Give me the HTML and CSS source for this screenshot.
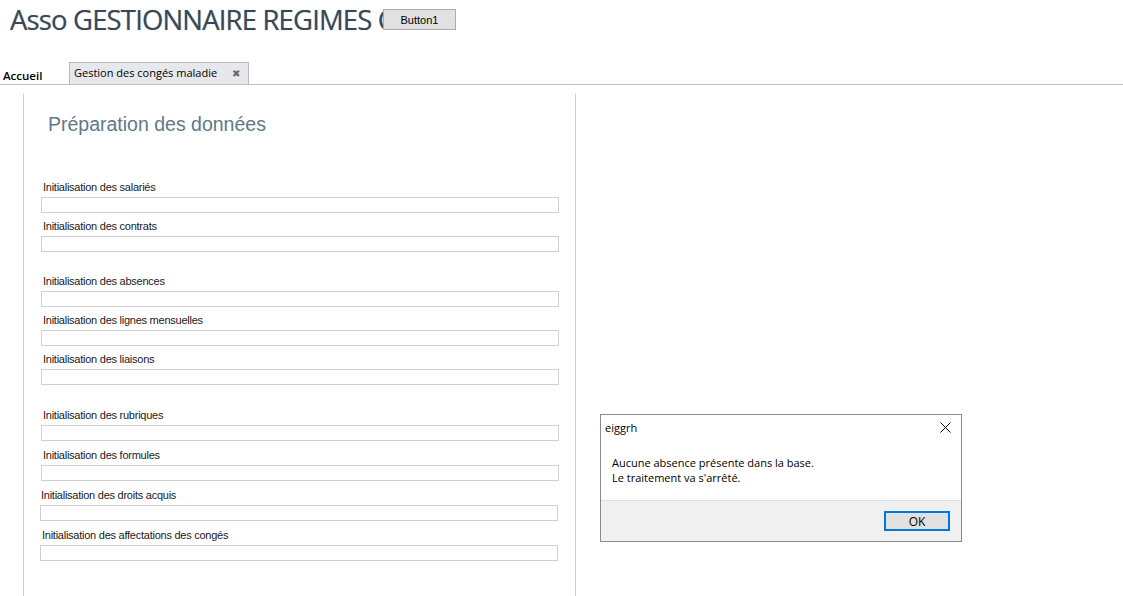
FILE: index.html
```html
<!DOCTYPE html>
<html lang="fr">
<head>
<meta charset="utf-8">
<title>Asso GESTIONNAIRE REGIMES CONGES</title>
<link rel="stylesheet" href="styles.css">
</head>
<body>
<header class="header">
  <h1 class="app-title">Asso GESTIONNAIRE REGIMES CONGES</h1>
  <button class="btn-classic">Button1</button>
</header>

<nav class="tabbar">
  <span class="tab-home">Accueil</span>
  <span class="tab-active">Gestion des congés maladie <span class="tab-close">&#x2716;</span></span>
</nav>

<main class="panel">
  <h2 class="panel-title">Préparation des données</h2>

  <div class="groups">
    <section class="group">
      <div class="field"><label class="field-label">Initialisation des salariés</label><div class="field-box"></div></div>
      <div class="field"><label class="field-label">Initialisation des contrats</label><div class="field-box"></div></div>
    </section>

    <section class="group">
      <div class="field"><label class="field-label">Initialisation des absences</label><div class="field-box"></div></div>
      <div class="field"><label class="field-label">Initialisation des lignes mensuelles</label><div class="field-box"></div></div>
      <div class="field"><label class="field-label">Initialisation des liaisons</label><div class="field-box"></div></div>
    </section>

    <section class="group group-wide">
      <div class="field"><label class="field-label">Initialisation des rubriques</label><div class="field-box"></div></div>
      <div class="field"><label class="field-label">Initialisation des formules</label><div class="field-box"></div></div>
      <div class="field field-shift"><label class="field-label label-tight">Initialisation des droits acquis</label><div class="field-box"></div></div>
      <div class="field field-shift"><label class="field-label">Initialisation des affectations des congés</label><div class="field-box"></div></div>
    </section>
  </div>
</main>

<div class="dialog">
  <div class="dialog-titlebar">
    <span class="dialog-title">eiggrh</span>
    <svg class="dialog-close" width="11" height="11" viewBox="0 0 11 11"><path d="M0.5 0.5 L10.5 10.5 M10.5 0.5 L0.5 10.5" stroke="#000" stroke-width="1" fill="none"/></svg>
  </div>
  <div class="dialog-body">
    <p>Aucune absence présente dans la base.</p>
    <p>Le traitement va s'arrêté.</p>
  </div>
  <div class="dialog-footer">
    <button class="btn-ok">OK</button>
  </div>
</div>
</body>
</html>
```

FILE: styles.css
```css
* { box-sizing: border-box; }

html, body {
  margin: 0;
  padding: 0;
  background: #ffffff;
  width: 1123px;
  height: 596px;
  overflow: hidden;
}

body {
  font-family: "Open Sans", "Noto Sans", sans-serif;
  position: relative;
}

/* Header */
.header {
  display: flex;
  align-items: flex-start;
  height: 62px;
  padding-left: 10px;
}

.app-title {
  margin: 0;
  width: 373px;
  overflow: hidden;
  white-space: nowrap;
  font-family: "Open Sans", sans-serif;
  font-weight: 400;
  font-size: 27.5px;
  letter-spacing: -0.85px;
  line-height: 40px;
  color: #3a4856;
  text-shadow: 0 0 1px rgba(58, 72, 86, 0.45);
}

.btn-classic {
  margin-top: 9px;
  width: 73px;
  height: 21px;
  padding: 0;
  border: 1px solid #adadad;
  background: #e1e1e1;
  font-family: "Liberation Sans", Arial, sans-serif;
  font-size: 11px;
  color: #000;
}

/* Tabs */
.tabbar {
  display: flex;
  align-items: flex-end;
  height: 23px;
  border-bottom: 1px solid #b6c3cb;
}

.tab-home {
  width: 69px;
  padding-left: 3px;
  font-size: 11.5px;
  font-weight: 600;
  color: #000;
  line-height: 17px;
}

.tab-active {
  display: flex;
  align-items: center;
  width: 180px;
  height: 22px;
  padding: 0 0 2px 4px;
  background: #e6e8eb;
  border: 1px solid #b7bbbf;
  border-bottom: none;
  font-size: 11px;
  color: #000;
}

.tab-close {
  margin-left: 15px;
  font-size: 10px;
  color: #6a6a6a;
}

/* Panel */
.panel {
  margin: 9px 0 0 23px;
  width: 553px;
  height: 502px;
  border-left: 1px solid #c9ced3;
  border-right: 1px solid #c9ced3;
  padding: 18px 0 0 0;
}

.panel-title {
  margin: 0 0 0 24px;
  font-family: "Liberation Sans", Arial, sans-serif;
  font-weight: 400;
  font-size: 19.5px;
  line-height: 24px;
  color: #5f7987;
}

.groups {
  display: flex;
  flex-direction: column;
  gap: 23px;
  margin-top: 45px;
  padding-left: 17px;
}

.group {
  display: flex;
  flex-direction: column;
  gap: 7px;
}

.group-wide {
  gap: 8px;
  margin-top: 1px;
}

.field {
  display: flex;
  flex-direction: column;
  gap: 3px;
  width: 518px;
}

.field-shift {
  margin-left: -1px;
}

.field-label {
  display: block;
  padding-left: 2px;
  font-family: "Liberation Sans", Arial, sans-serif;
  font-size: 11px;
  letter-spacing: -0.25px;
  line-height: 13px;
  color: #1a1a1a;
}

.label-tight {
  padding-left: 1px;
}

.field-box {
  height: 16px;
  border: 1px solid #d0d0d0;
  background: #fff;
}

/* Dialog */
.dialog {
  position: absolute;
  left: 600px;
  top: 414px;
  width: 362px;
  height: 128px;
  border: 1px solid #8a8a8a;
  background: #fff;
  display: flex;
  flex-direction: column;
  font-size: 11px;
  color: #000;
}

.dialog-titlebar {
  display: flex;
  align-items: center;
  justify-content: space-between;
  height: 25px;
  padding: 0 10px 0 4px;
}

.dialog-close {
  display: block;
}

.dialog-body {
  padding: 15px 11px 15px 11px;
}

.dialog-body p {
  margin: 0;
  line-height: 15px;
}

.dialog-footer {
  flex: 1;
  display: flex;
  justify-content: flex-end;
  align-items: flex-start;
  padding: 10px 11px 0 0;
  background: #f0f0f0;
  border-top: 1px solid #dfdfdf;
}

.btn-ok {
  width: 66px;
  height: 20px;
  padding: 0;
  border: 2px solid #0078d7;
  background: #e1e1e1;
  font-family: "Open Sans", sans-serif;
  font-size: 12px;
  color: #000;
}
```
